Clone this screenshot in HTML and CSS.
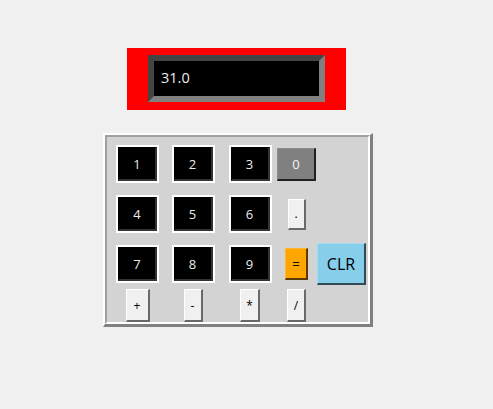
FILE: index.html
```html
<!DOCTYPE html>
<html>
<head>
<meta charset="utf-8">
<link rel="stylesheet" href="styles.css">
</head>
<body>
<div class="display">
  <div class="entry">31.0</div>
</div>
<div class="calc">
  <div class="calc-inner">
    <div class="grid">
      <div class="ring"><div class="btn num">1</div></div>
      <div class="ring"><div class="btn num">2</div></div>
      <div class="ring"><div class="btn num">3</div></div>
      <div class="btn zero">0</div>
      <div></div>

      <div class="ring"><div class="btn num">4</div></div>
      <div class="ring"><div class="btn num">5</div></div>
      <div class="ring"><div class="btn num">6</div></div>
      <div class="btn std dot">.</div>
      <div></div>

      <div class="ring"><div class="btn num">7</div></div>
      <div class="ring"><div class="btn num">8</div></div>
      <div class="ring"><div class="btn num">9</div></div>
      <div class="btn eq">=</div>
      <div class="btn clr">CLR</div>

      <div class="btn std op plus">+</div>
      <div class="btn std op minus">-</div>
      <div class="btn std op mul">*</div>
      <div class="btn std op div">/</div>
      <div></div>
    </div>
  </div>
</div>
</body>
</html>
```
FILE: styles.css
```css
html, body {
  margin: 0;
  padding: 0;
  background: #f0f0f0;
  width: 493px;
  height: 409px;
  overflow: hidden;
  font-family: "Open Sans", "Noto Sans", "Liberation Sans", sans-serif;
}

.display {
  margin: 48px 0 0 127px;
  width: 219px;
  height: 62px;
  box-sizing: border-box;
  background: #ff0000;
  padding: 7px 21px 8px 21px;
}

.entry {
  box-sizing: border-box;
  width: 177px;
  height: 47px;
  background: #000;
  border-style: solid;
  border-width: 6px;
  border-color: #444444 #808080 #808080 #444444;
  color: #ececec;
  font-size: 14.5px;
  line-height: 33px;
  padding-left: 7px;
}

.calc {
  margin: 23px 0 0 103px;
  width: 270px;
  box-sizing: border-box;
  border-style: solid;
  border-width: 2px 3px 3px 2px;
  border-color: #ffffff #808080 #808080 #ffffff;
}

.calc-inner {
  background: #d3d3d3;
  border-style: solid;
  border-width: 2px 2px 2px 2px;
  border-color: #a0a0a0 #ffffff #ffffff #a0a0a0;
  padding: 2px 0 0 6px;
}

.grid {
  display: grid;
  grid-template-columns: 49px 62px 52px 41px 49px;
  grid-template-rows: 50px 50px 50px 33px;
  justify-items: center;
  align-items: center;
}

.btn {
  box-sizing: border-box;
  display: flex;
  align-items: center;
  justify-content: center;
  font-size: 13px;
  border-style: solid;
}

.ring {
  box-sizing: border-box;
  width: 43px;
  height: 38px;
  border: 2px solid #ffffff;
}

.num {
  width: 39px;
  height: 34px;
  background: #000;
  color: #ececec;
  border-width: 1px 2px 2px 1px;
  border-color: #000 #333 #333 #000;
}

.zero {
  width: 39px;
  height: 33px;
  background: #808080;
  color: #f4f4f4;
  border-width: 1px 2px 2px 1px;
  border-color: #8c8c8c #202020 #202020 #8c8c8c;
}

.std {
  background: #f0f0f0;
  color: #000;
  border-width: 1px 2px 2px 1px;
  border-color: #ffffff #696969 #696969 #ffffff;
  font-size: 12px;
}

.dot {
  width: 18px;
  height: 31px;
}

.eq {
  width: 23px;
  height: 32px;
  background: #ffa500;
  color: #000;
  border-width: 1px 2px 2px 1px;
  border-color: #ffb733 #5a3a00 #5a3a00 #ffb733;
}

.clr {
  width: 49px;
  height: 42px;
  background: #87ceeb;
  color: #000;
  font-size: 16px;
  border-width: 1px 2px 2px 1px;
  border-color: #a5dbf0 #2f4a55 #2f4a55 #a5dbf0;
}

.op {
  height: 33px;
}

.plus { width: 24px; }
.minus { width: 19px; }
.mul { width: 20px; }
.div { width: 19px; }
```
